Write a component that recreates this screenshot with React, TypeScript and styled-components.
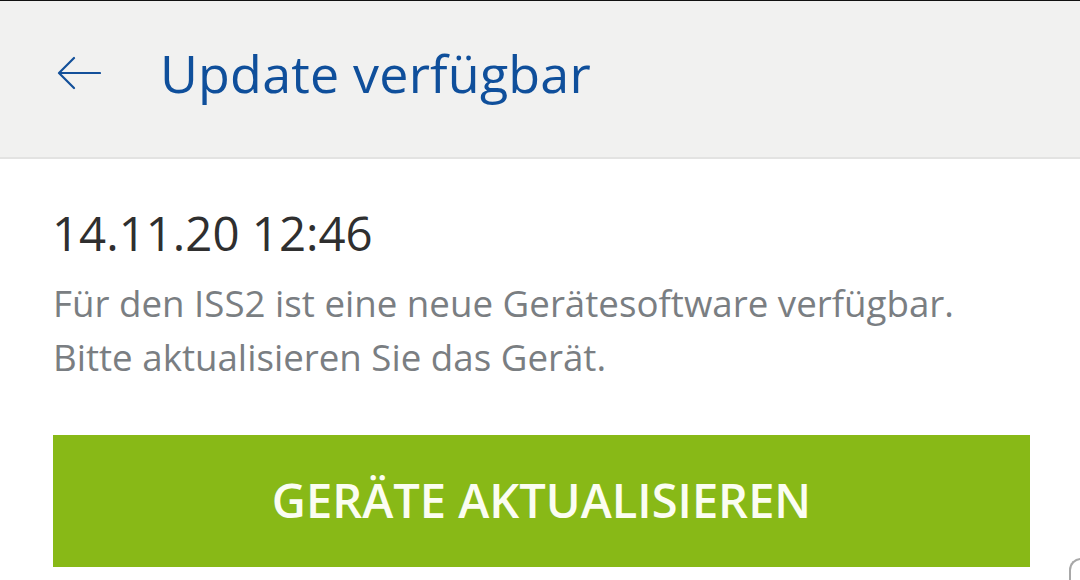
import React from "react";
import styled, { createGlobalStyle } from "styled-components";

const Global = createGlobalStyle`
  html, body { margin: 0; padding: 0; background: #ffffff; }
  body { font-family: "Open Sans", "Noto Sans", sans-serif; }
  * { box-sizing: border-box; }
`;

const Screen = styled.div`
  position: relative;
  width: 1080px;
  height: 580px;
  overflow: hidden;
  background: #ffffff;
  border-top: 1px solid #111111;
  display: flex;
  flex-direction: column;
`;

const Header = styled.header`
  height: 158px;
  flex: none;
  background: #f1f1f0;
  border-bottom: 2px solid #e3e3e2;
  display: flex;
  align-items: center;
  padding-left: 56px;
  padding-bottom: 12px;
`;

const BackButton = styled.button`
  border: 0;
  background: transparent;
  padding: 0;
  width: 46px;
  height: 36px;
  display: flex;
  align-items: center;
  justify-content: center;
  color: #13509a;
  margin-right: 58px;
`;

const Title = styled.h1`
  margin: 0;
  font-family: "Open Sans", sans-serif;
  font-weight: 400;
  font-size: 52px;
  line-height: 1;
  color: #0f4f9b;
  letter-spacing: 0.2px;
`;

const Content = styled.main`
  padding: 50px 50px 0 53px;
  display: flex;
  flex-direction: column;
`;

const DateLine = styled.div`
  font-size: 47.4px;
  line-height: 1;
  color: #2f2f2f;
  font-weight: 400;
  margin-left: -1px;
`;

const Message = styled.p`
  margin: 20px 0 0 0;
  font-size: 36.7px;
  line-height: 54px;
  color: #7a7e82;
`;

const ActionButton = styled.button`
  margin-top: 51px;
  width: 977px;
  height: 132px;
  border: 0;
  background: #88b917;
  color: #fbfdf2;
  font-family: "Open Sans", sans-serif;
  font-weight: 600;
  font-size: 47px;
  letter-spacing: 0;
  display: flex;
  align-items: center;
  justify-content: center;
  padding: 0 0 2px 0;
`;

const CornerHint = styled.div`
  position: absolute;
  left: 1069px;
  top: 557px;
  width: 40px;
  height: 40px;
  border-left: 2px solid #a8a8a8;
  border-top: 2px solid #a8a8a8;
  border-top-left-radius: 12px;
`;

export default function App() {
  return (
    <>
      <Global />
      <Screen>
        <Header>
          <BackButton aria-label="Zurück">
            <svg width="44" height="36" viewBox="0 0 44 36" fill="none">
              <path d="M43 18H3M17 3L2 18l15 15" stroke="currentColor" strokeWidth="2.2" strokeLinecap="round" strokeLinejoin="round" />
            </svg>
          </BackButton>
          <Title>Update verfügbar</Title>
        </Header>
        <Content>
          <DateLine>14.11.20 12:46</DateLine>
          <Message>
            Für den ISS2 ist eine neue Gerätesoftware verfügbar.
            <br />
            Bitte aktualisieren Sie das Gerät.
          </Message>
          <ActionButton>GERÄTE AKTUALISIEREN</ActionButton>
        </Content>
        <CornerHint />
      </Screen>
    </>
  );
}
